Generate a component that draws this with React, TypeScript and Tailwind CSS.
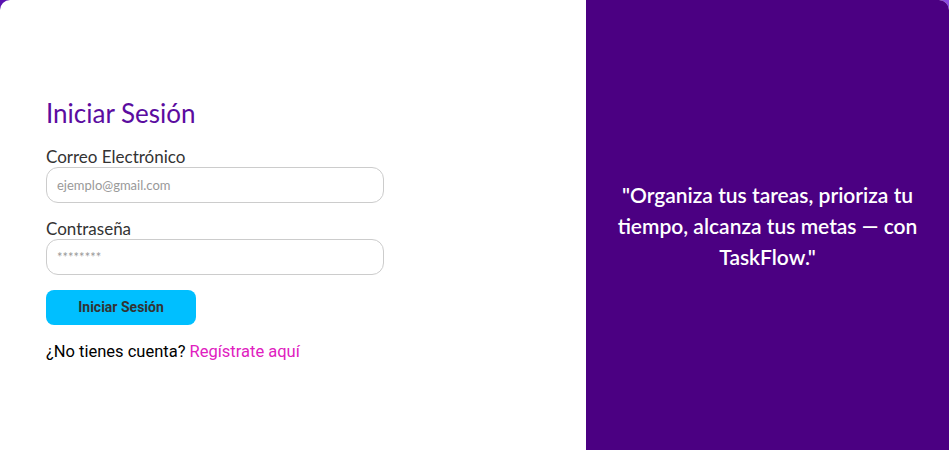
import React from 'react';

export default function App() {
    return (
        <div className="w-full h-[450px] overflow-hidden bg-gradient-to-r from-[#5a12b0] to-[#8a4ae0]">
            <div className="flex h-[470px] rounded-[10px] overflow-hidden bg-white">
                {/* formulario */}
                <div className="w-[586px] flex flex-col justify-center pl-[46px] pb-[8px] font-['Lato',sans-serif]">
                    <h1 className="text-[26px] leading-[30px] text-[#5b0ca0] mb-[20px]">Iniciar Sesión</h1>
                    <label className="text-[17px] leading-[18px] text-[#333]">Correo Electrónico</label>
                    <input
                        type="email"
                        placeholder="ejemplo@gmail.com"
                        className="mt-[1px] w-[338px] h-[36px] rounded-[12px] border border-[#ccc] px-[10px] text-[13px] placeholder:text-[#999] outline-none"
                    />
                    <label className="mt-[17px] text-[17px] leading-[18px] text-[#333]">Contraseña</label>
                    <input
                        type="password"
                        placeholder="********"
                        className="mt-[1px] w-[338px] h-[36px] rounded-[12px] border border-[#ccc] px-[10px] text-[13px] placeholder:text-[#999] outline-none"
                    />
                    <button className="mt-[15px] w-[150px] h-[35px] rounded-[8px] bg-[#00bfff] text-[14px] font-bold text-[#333] font-['Roboto',sans-serif]">
                        Iniciar Sesión
                    </button>
                    <p className="mt-[15px] text-[16.5px] text-black font-['Roboto',sans-serif]">
                        ¿No tienes cuenta? <a href="#" className="text-[#e020c0]">Regístrate aquí</a>
                    </p>
                </div>
                {/* frase */}
                <div className="flex-1 bg-[#4b0082] flex items-center justify-center px-[20px] pb-[20px]">
                    <p className="text-center text-white text-[21px] leading-[31px] font-semibold font-['Lato',sans-serif]">
                        "Organiza tus tareas, prioriza tu tiempo, alcanza tus metas — con TaskFlow."
                    </p>
                </div>
            </div>
        </div>
    );
}
